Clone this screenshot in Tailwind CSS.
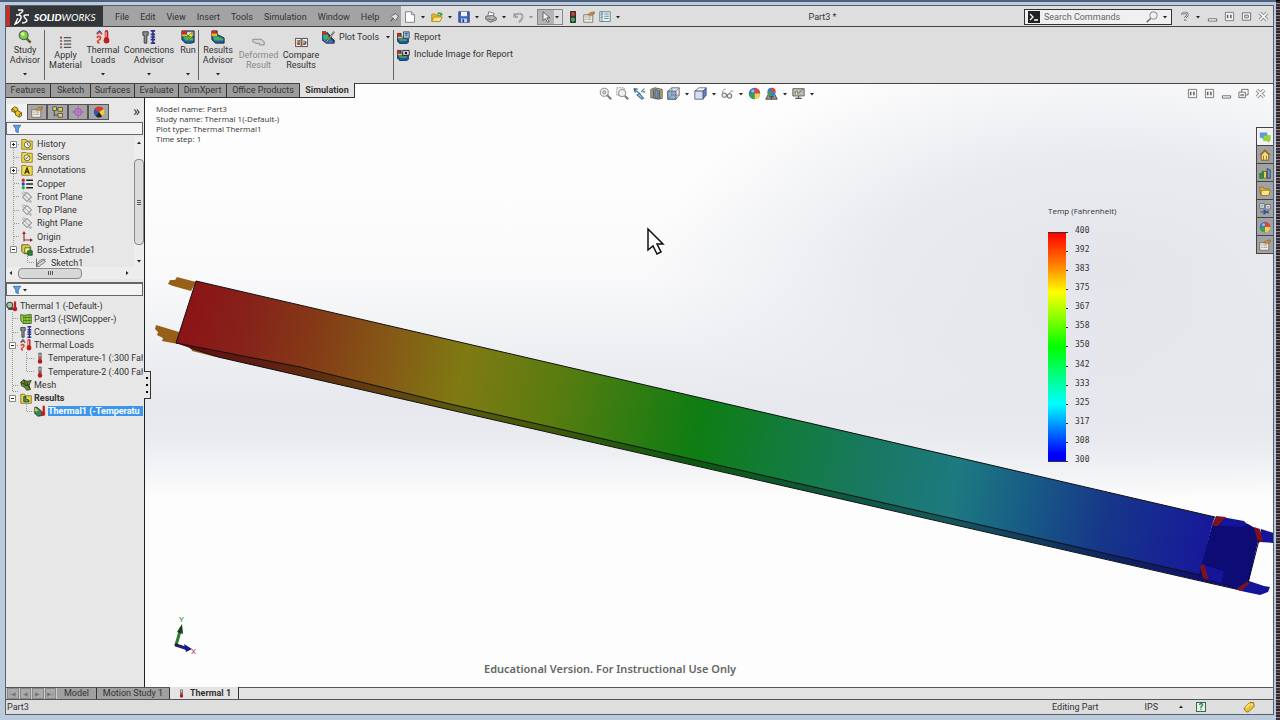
<!DOCTYPE html>
<html lang="en">
<head>
  <meta charset="UTF-8" />
  <meta name="viewport" content="width=device-width, initial-scale=1.0" />
  <title>SolidWorks - Part3 *</title>
  <script src="https://cdn.jsdelivr.net/npm/@tailwindcss/browser@4"></script>
</head>
<body class="h-screen overflow-hidden bg-black font-['Roboto','Liberation_Sans',sans-serif] text-[9px] leading-[10px] text-[#333]">

  <!-- Icon set -->
  <svg class="hidden">
    <symbol id="i-down" viewBox="0 0 6 4"><path d="M1 1h4L3 3.500z" fill="#222"/></symbol>
    <symbol id="i-mag" viewBox="0 0 16 16"><path d="M9.500 9.500l5 5" stroke="#5a6a20" stroke-width="3"/><circle cx="6.500" cy="6" r="5" fill="#7fd23c" stroke="#4c6670" stroke-width="1.500"/><circle cx="5.500" cy="4.500" r="2" fill="#e6f8a0"/></symbol>
    <symbol id="i-material" viewBox="0 0 16 16"><path d="M6 2h9M6 6h9M6 10h9M6 14h9" stroke="#555" stroke-width="1.300"/><circle cx="2.500" cy="2" r="1.400" fill="#b33"/><circle cx="2.500" cy="6" r="1.400" fill="#777"/><circle cx="2.500" cy="10" r="1.400" fill="#a55"/><circle cx="2.500" cy="14" r="1.400" fill="#777"/></symbol>
    <symbol id="i-copper" viewBox="0 0 16 16"><path d="M7 3h9M7 8h9M7 13h9" stroke="#222" stroke-width="2"/><circle cx="3" cy="3" r="2.200" fill="#d22"/><circle cx="3" cy="8" r="2.200" fill="#24a"/><circle cx="3" cy="13" r="2.200" fill="#2a5"/></symbol>
    <symbol id="i-loads" viewBox="0 0 16 16"><path d="M1 5l3-3 3 3M1 9c3-4 6 0 3 2s-3 3 0 4" fill="none" stroke="#d8431f" stroke-width="2"/><path d="M1 4l3-3 2 2" fill="none" stroke="#36c" stroke-width="1.500"/><path d="M12 2v9" stroke="#c21d1d" stroke-width="4" stroke-linecap="round"/><circle cx="12" cy="12" r="3.300" fill="#c21d1d"/><path d="M11.500 2v6" stroke="#fff"/></symbol>
    <symbol id="i-conn" viewBox="0 0 16 16"><path d="M1 2h6v4H5.500v9h-3V6H1z" fill="#8a8f98" stroke="#333"/><path d="M10 1h5M10 15h5M12.500 1v14M10 5h5M10 8h5M10 11h5" stroke="#2b3190" stroke-width="1.800"/></symbol>
    <symbol id="i-run" viewBox="0 0 16 16"><path d="M1 1h14v13l-3 1H5l-4-4z" fill="#1c5fae" stroke="#223"/><path d="M1 1h5v4H1z" fill="#d3271e"/><path d="M1 5h6v2H1z" fill="#f5b21d"/><path d="M7 2h7v4H7z" fill="#ded9b0"/><path d="M2 7h8l4 3v2H5z" fill="#45b649"/><path d="M14 1L8 7h3l-3 5 7-7h-3z" fill="#ffe83a" stroke="#665500" stroke-width=".6"/></symbol>
    <symbol id="i-plot" viewBox="0 0 16 16"><path d="M1 1h6v4l8 4v6H5l-4-4z" fill="#1c5fae" stroke="#223"/><path d="M1 1h5v4H1z" fill="#d3271e"/><path d="M1 4h6v3H1z" fill="#f5b21d"/><path d="M2 7h5l7 3v2H4z" fill="#43b648"/></symbol>
    <symbol id="i-deformed" viewBox="0 0 16 16"><path d="M1 4h10l4 3v4H9V9H5l-4-2z" fill="#d5d5d5" stroke="#8b8b8b" stroke-width="1.200"/></symbol>
    <symbol id="i-compare" viewBox="0 0 16 16"><path d="M.500 3h7v10h-7zM8.500 3h7v10h-7z" fill="#f2f2f2" stroke="#333"/><path d="M2 5h2v6H2zM10 5h2v6h-2z" fill="#e5a21e"/><path d="M4 5h2v3H4zM12 6h2v4h-2z" fill="#2b61c4"/><path d="M3 8h3v3H3zM10 9h3v2h-3z" fill="#c4382a"/></symbol>
    <symbol id="i-plottools" viewBox="0 0 16 16"><path d="M0 1h5v4l6 4 4 2v4H5l-5-4z" fill="#2c77c8" stroke="#223"/><path d="M0 1h5v3H0z" fill="#d3271e"/><path d="M1 5h5l5 5H3z" fill="#43b648"/><path d="M6 2l9 11M15 1L5 14" stroke="#333" stroke-width="2"/><path d="M15 1L5 14" stroke="#eee" stroke-width=".8"/></symbol>
    <symbol id="i-report" viewBox="0 0 16 16"><path d="M0 3h5v4l9 2v5l-3 2H4l-4-4z" fill="#1d57a8" stroke="#223"/><path d="M0 3h4v3H0z" fill="#d3271e"/><path d="M1 7h6v2H1z" fill="#f5c21d"/><path d="M2 10h10v2H4z" fill="#43b648"/><path d="M8 1h7v8H8z" fill="#9dbce8" stroke="#345"/><path d="M10 3h3M10 5h3" stroke="#245"/></symbol>
    <symbol id="i-incimg" viewBox="0 0 16 16"><path d="M0 3h5v4l9 2v5l-3 2H4l-4-4z" fill="#1d57a8" stroke="#223"/><path d="M0 3h4v3H0z" fill="#d3271e"/><path d="M1 7h6v2H1z" fill="#f5c21d"/><path d="M2 10h10v2H4z" fill="#43b648"/><path d="M7 3h8v6H7z" fill="#ddd" stroke="#111"/><circle cx="11" cy="6" r="1.500" fill="#111"/></symbol>
    <symbol id="i-new" viewBox="0 0 16 16"><path d="M2 1h8l4 4v10H2z" fill="#fff" stroke="#666"/><path d="M10 1v4h4" fill="#ddd" stroke="#666"/></symbol>
    <symbol id="i-open" viewBox="0 0 16 16"><path d="M1 14V4h5l1 2h6v3" fill="#e2b93c" stroke="#a67c14"/><path d="M1 14l3-6h11l-3 6z" fill="#fbe37c" stroke="#a67c14"/><path d="M8 4c1-3 4-3 5-1V1l3 4-4 2 .500-2C11 3 10 4 9 5z" fill="#35a535"/></symbol>
    <symbol id="i-save" viewBox="0 0 16 16"><path d="M1 1h14v14H1z" fill="#3c63b8" stroke="#1d3a80"/><path d="M4 1h8v6H4z" fill="#eef3fb"/><path d="M4 10h8v5H4z" fill="#c3cfe4"/><path d="M6 11h2v4H6z" fill="#1d3a80"/></symbol>
    <symbol id="i-print" viewBox="0 0 16 16"><path d="M4 6l1-5 7 2-1 4" fill="#fff" stroke="#555"/><path d="M1 7l9-1 5 3v3l-8 3-6-4z" fill="#b9b9b9" stroke="#444"/><path d="M3 10l6 2 4-2" fill="none" stroke="#555"/></symbol>
    <symbol id="i-undo" viewBox="0 0 16 16"><path d="M3 3v5h5" fill="none" stroke="#777" stroke-width="1.500"/><path d="M3 8c2-6 11-6 11 0 0 3-2 5-5 7" fill="none" stroke="#888" stroke-width="2.500"/><path d="M3 8c2-6 11-6 11 0 0 3-2 5-5 7" fill="none" stroke="#d4d4d4"/></symbol>
    <symbol id="i-arrow" viewBox="0 0 16 16"><path d="M4 1v12l3-3 3 5 2-1-3-5h4z" fill="#f2f2f2" stroke="#444"/></symbol>
    <symbol id="i-light" viewBox="0 0 16 16"><rect x="4" y="0" width="8" height="16" rx="1" fill="#333"/><circle cx="8" cy="4" r="2.700" fill="#d93a2b"/><circle cx="8" cy="11.500" r="2.700" fill="#36b54a"/></symbol>
    <symbol id="i-props" viewBox="0 0 16 16"><path d="M1 5h12v10H1z" fill="#f3efe4" stroke="#6b6252"/><path d="M3 8h2M6 8h5M3 11h2M6 11h5" stroke="#777"/><path d="M6 5l4-3 5-1v3l-5 2z" fill="#c98d4d" stroke="#7c522a" stroke-width=".7"/></symbol>
    <symbol id="i-options" viewBox="0 0 16 16"><path d="M1 1h14v13H1z" fill="#e6f0f4" stroke="#4a6d7c"/><path d="M4 1v13M7 4h6M7 7h6M7 10h6" stroke="#46707e"/><path d="M2 4l1 1 2-2M2 8l1 1 2-2" fill="none" stroke="#3a8a4a"/></symbol>
    <symbol id="i-pin" viewBox="0 0 16 16"><path d="M8 2l6 5-2 1-1 4-3 1-6-6 2-2 3-1z" fill="#ddd" stroke="#444"/><path d="M5 10l-4 5" stroke="#333" stroke-width="1.500"/></symbol>
    <symbol id="i-search" viewBox="0 0 16 16"><circle cx="10" cy="6" r="5" fill="#eef2f6" stroke="#667"/><path d="M6 10l-5 5" stroke="#666" stroke-width="2"/></symbol>
    <symbol id="i-min" viewBox="0 0 12 12"><path d="M1.500 8.500h9v2.500h-9z" fill="#fff" stroke="#666"/></symbol>
    <symbol id="i-tile" viewBox="0 0 12 12"><path d="M1.500 1.500h9v9h-9z" fill="#f4f4f4" stroke="#777"/><path d="M4 4v4M7.500 4v4" stroke="#666" stroke-width="1.700"/></symbol>
    <symbol id="i-max" viewBox="0 0 12 12"><path d="M1.500 2h9v8h-9z" fill="#fff" stroke="#666"/><path d="M4 4.500h4v3H4z" fill="#ddd" stroke="#666"/></symbol>
    <symbol id="i-restore" viewBox="0 0 12 12"><path d="M4 1.500h7v6H4z" fill="#fff" stroke="#666"/><path d="M1 4.500h7v6H1z" fill="#fff" stroke="#666"/><path d="M3 7h3v1.500H3z" fill="#ddd" stroke="#666" stroke-width=".8"/></symbol>
    <symbol id="i-close" viewBox="0 0 12 12"><path d="M2 2l8 8M10 2l-8 8" stroke="#777" stroke-width="3.600"/><path d="M2 2l8 8M10 2l-8 8" stroke="#fff" stroke-width="1.800"/></symbol>
    <symbol id="i-help" viewBox="0 0 12 12"><path d="M3 4c0-4 7-4 7 0 0 2-3 2-3 4M7 9.500v2" fill="none" stroke="#666" stroke-width="3"/><path d="M3 4c0-4 7-4 7 0 0 2-3 2-3 4M7 9.800v1.400" fill="none" stroke="#f4f4f4" stroke-width="1.200"/></symbol>
    <symbol id="i-zoomfit" viewBox="0 0 16 16"><circle cx="6.500" cy="6.500" r="5" fill="#eee" stroke="#777"/><circle cx="6.500" cy="6.500" r="2" fill="#ccc" stroke="#888"/><path d="M10 10l5 5" stroke="#777" stroke-width="2.500"/></symbol>
    <symbol id="i-zoomarea" viewBox="0 0 16 16"><path d="M1 1h9v9H1z" fill="none" stroke="#777" stroke-dasharray="2 1"/><circle cx="7.500" cy="7.500" r="4.500" fill="#eee" stroke="#777"/><path d="M11 11l4 4" stroke="#777" stroke-width="2.500"/></symbol>
    <symbol id="i-prev" viewBox="0 0 16 16"><path d="M1 2l8 7M1 2l2 5M1 2l5 .500" stroke="#3d7193" stroke-width="1.500"/><path d="M8 8l5 6-2 1-6-5zM10 6l4-4M12 6h3" fill="#9bc5df" stroke="#3d7193" stroke-width="1.300"/></symbol>
    <symbol id="i-section" viewBox="0 0 16 16"><path d="M1 3l5-2 9 2v11l-5 1-9-2z" fill="#c9b972" stroke="#444"/><path d="M4 3v10M12 4v10" stroke="#555" stroke-width="1.500"/><path d="M6 3l4 1v10l-4-1z" fill="#6a93cf" stroke="#456"/></symbol>
    <symbol id="i-orient" viewBox="0 0 16 16"><path d="M1 5l5-4h9v9l-4 5H1z" fill="#e8eff8" stroke="#555"/><path d="M1 5h10v10H1z" fill="#8fb2dc" stroke="#555"/><path d="M11 5l4-4M6 1v9h9M6 10l-5 5" stroke="#666" fill="none" stroke-width=".8"/></symbol>
    <symbol id="i-cube" viewBox="0 0 16 16"><path d="M1 5l5-4h9l-4 4z" fill="#fff" stroke="#557"/><path d="M11 5l4-4v9l-4 5z" fill="#5c7fc8" stroke="#557"/><path d="M1 5h10v10H1z" fill="#d3e0f6" stroke="#557"/></symbol>
    <symbol id="i-glasses" viewBox="0 0 16 16"><path d="M2 8c0-4 2-6 4-5M10 9c1-3 3-5 5-4" fill="none" stroke="#777"/><circle cx="4" cy="10" r="2.700" fill="#eee" stroke="#777" stroke-width="1.300"/><circle cx="10.500" cy="11" r="2.700" fill="#eee" stroke="#777" stroke-width="1.300"/></symbol>
    <symbol id="i-ball" viewBox="0 0 16 16"><circle cx="8" cy="8" r="7" fill="#3f6fd0"/><path d="M8 8V1a7 7 0 0 1 7 7z" fill="#e2453b"/><path d="M8 8h7a7 7 0 0 1-7 7z" fill="#f2d64a"/><path d="M8 8v7a7 7 0 0 1-7-7z" fill="#35a24c"/><circle cx="6" cy="5" r="2" fill="#fff" fill-opacity=".5"/></symbol>
    <symbol id="i-scene" viewBox="0 0 16 16"><path d="M1 15l3-6h8l3 6z" fill="#999" stroke="#333"/><path d="M5 12h6M8 9v6" stroke="#333"/><circle cx="8" cy="6" r="5" fill="#4776cf"/><path d="M8 6V1a5 5 0 0 1 5 5z" fill="#e2453b"/><path d="M8 6H3a5 5 0 0 0 5 5z" fill="#3aa650"/></symbol>
    <symbol id="i-screen" viewBox="0 0 16 16"><path d="M1 2h14v9H1z" fill="#b9bcae" stroke="#555"/><path d="M4 9V6h3v3M8 8l6-6" stroke="#666" fill="#eee"/><path d="M4 14h8M8 11v3" stroke="#555" stroke-width="1.500"/></symbol>
    <symbol id="i-part" viewBox="0 0 16 16"><path d="M1 4l4-3 4 2v3l5 3v4l-3 2-5-3v-3L1 7z" fill="#e9c62c" stroke="#4c3f06"/><path d="M1 4l4 2v3M9 6l-4 2M14 9l-3 2v3" fill="none" stroke="#4c3f06"/></symbol>
    <symbol id="i-config" viewBox="0 0 16 16"><path d="M3 1v13M3 4h5M3 12h5" stroke="#333"/><path d="M1 1h5v5H1zM8 2h6v5H8zM8 10h6v5H8z" fill="#e0cf50" stroke="#444"/></symbol>
    <symbol id="i-target" viewBox="0 0 16 16"><circle cx="8" cy="8" r="4.500" fill="none" stroke="#b058c8" stroke-width="1.500"/><path d="M8 0v16M0 8h16" stroke="#b058c8" stroke-width="1.300"/></symbol>
    <symbol id="i-rball" viewBox="0 0 16 16"><circle cx="8" cy="8" r="7" fill="#2d57b8"/><path d="M8 8L2 4a7 7 0 0 1 12 0z" fill="#dc3a28"/><path d="M8 8l6-4a7 7 0 0 1-2 10z" fill="#f0cf38"/><path d="M8 8l4 6a7 7 0 0 1-8 0z" fill="#222"/></symbol>
    <symbol id="i-filter" viewBox="0 0 16 16"><path d="M2 2h12l-4 6v6l-4-2V8z" fill="#5aa2e8" stroke="#1f4e92"/></symbol>
    <symbol id="i-history" viewBox="0 0 16 16"><path d="M1 2h6l1 2h7v11H1z" fill="#e8d23e" stroke="#7d6b10"/><circle cx="8.500" cy="9" r="4" fill="#fff" stroke="#333"/><path d="M8.500 6.500V9l2 1" fill="none" stroke="#222"/></symbol>
    <symbol id="i-sensor" viewBox="0 0 16 16"><path d="M1 2h6l1 1h7v12H1z" fill="#f1dc4c" stroke="#7d6b10"/><circle cx="8" cy="9" r="4" fill="#fbf4c0" stroke="#444"/><path d="M6 11l4-4" stroke="#333" stroke-width="1.300"/></symbol>
    <symbol id="i-annot" viewBox="0 0 16 16"><path d="M1 2h6l1 1h7v12H1z" fill="#f1dc4c" stroke="#7d6b10"/><path d="M5 13l3-8 3 8M6 10.500h4" fill="none" stroke="#222" stroke-width="1.500"/></symbol>
    <symbol id="i-plane" viewBox="0 0 16 16"><path d="M8 2l6 6-6 6-6-6z" fill="none" stroke="#666" stroke-width="1.200"/><path d="M1 2l13 12M3 1l4 2M10 14l4 1" stroke="#888"/></symbol>
    <symbol id="i-origin" viewBox="0 0 16 16"><path d="M4 14V3M4 12h10" stroke="#a3222c" stroke-width="1.500" fill="none"/><path d="M4 0l2.500 4h-5zM16 12l-4-2.500v5z" fill="#a3222c"/></symbol>
    <symbol id="i-extrude" viewBox="0 0 16 16"><path d="M1 1h9l3 3v9H4l-3-3z" fill="#d8cf46" stroke="#4e4a10"/><path d="M5 5h7v7H5z" fill="#f3ee9a" stroke="#4e4a10"/><path d="M9 9h6v6H9z" fill="#2c8a35" stroke="#154a1b"/></symbol>
    <symbol id="i-sketch" viewBox="0 0 16 16"><path d="M2 2v12M2 10c4-7 8-7 12-7" fill="none" stroke="#555"/><path d="M2 14l2-5 8-5 2 2-8 6z" fill="#ddd" stroke="#555"/></symbol>
    <symbol id="i-study" viewBox="0 0 16 16"><circle cx="5" cy="7" r="4" fill="#a8cc8a" stroke="#445" stroke-width="1.500"/><path d="M3 12h9" stroke="#345" stroke-width="2.500"/><path d="M12 2v9" stroke="#c21d1d" stroke-width="3"/><circle cx="12" cy="12" r="3" fill="#c21d1d"/></symbol>
    <symbol id="i-mesh" viewBox="0 0 16 16"><path d="M1 2l4 1 10-1v12H4L1 10z" fill="#a8cc3a" stroke="#274d12"/><path d="M5 3v11M8 3v11M12 2v12M4 6h11M4 10h11" stroke="#2d7a24"/></symbol>
    <symbol id="i-temp" viewBox="0 0 16 16"><path d="M8 1v10" stroke="#444" stroke-width="4"/><path d="M8 2v9" stroke="#e6e6e6" stroke-width="1.500"/><path d="M8 6v6" stroke="#c62222" stroke-width="1.800"/><circle cx="8" cy="12.500" r="3" fill="#b51c1c"/></symbol>
    <symbol id="i-meshpart" viewBox="0 0 16 16"><path d="M1 4l4-3 4 2 6-1-3 6 2 6-5 1-3-4-4-2z" fill="#6c8a33" stroke="#26320d"/><path d="M1 5l6 2M5 1l3 8M9 3l3 9M6 9l7-2" stroke="#26320d"/></symbol>
    <symbol id="i-results" viewBox="0 0 16 16"><path d="M1 3h5l1 2h8v10H1z" fill="#f0d640" stroke="#6f5e0e"/><path d="M5 6h3v3l4 2v2H5z" fill="#2c9a4a" stroke="#234"/></symbol>
    <symbol id="i-thermal" viewBox="0 0 16 16"><path d="M1 3h3l7 6v5l-6 1-4-4z" fill="#2b8a66" stroke="#123"/><path d="M1 3l5 4-3 2-2-1z" fill="#e0c22e"/><path d="M13 1v9" stroke="#c21d1d" stroke-width="3"/><circle cx="12" cy="11.500" r="3" fill="#c21d1d"/></symbol>
    <symbol id="i-chat" viewBox="0 0 16 16"><path d="M1 2h10v7H6l-2 2V9H1z" fill="#5a9be0"/><path d="M6 6h9v7h-2v2l-2-2H6z" fill="#9ad43c" stroke="#77b02a" stroke-width=".6"/></symbol>
    <symbol id="i-home" viewBox="0 0 16 16"><path d="M1 8l7-7 7 7" fill="#c88d2c" stroke="#6d4a10"/><path d="M3 8l5-5 5 5v7H3z" fill="#f4dd80" stroke="#6d4a10"/><path d="M6 9v6M10 9v6" stroke="#8a5a1a"/></symbol>
    <symbol id="i-lib" viewBox="0 0 16 16"><path d="M1 8l2 2 2-5v10H1z" fill="#2f9c3c" stroke="#173"/><path d="M6 6h4v9H6z" fill="#e4d040" stroke="#553"/><path d="M11 2l4 2v11h-4z" fill="#6f95cc" stroke="#235"/></symbol>
    <symbol id="i-folder" viewBox="0 0 16 16"><path d="M1 3h5l1 2h6v8H2z" fill="#dcb848" stroke="#8a6a14"/><path d="M3 7h12l-2 7H3z" fill="#fae58a" stroke="#8a6a14"/></symbol>
    <symbol id="i-palette" viewBox="0 0 16 16"><path d="M1 1h6v6H1zM9 2h6v6H9z" fill="#eee" stroke="#555"/><path d="M3 3h2v2H3zM11 4h2v2h-2z" fill="#48a"/><path d="M2 12h6M6 9l4 3-4 3M12 10v4" fill="none" stroke="#23419c" stroke-width="1.600"/></symbol>
    <symbol id="i-tag" viewBox="0 0 16 16"><path d="M2 9l7-7 5 0 1 5-7 7c-2 1-4 1-5-1s-2-3-1-4z" fill="#f0c52c" stroke="#7a5a08"/><path d="M4 9l5-5" stroke="#fff3a8" stroke-width="1.500"/><circle cx="12" cy="4.500" r="1" fill="#fff"/></symbol>
  </svg>

  <div class="flex h-full">
    <!-- Application window -->
    <div class="flex min-w-0 flex-1 flex-col border-t-2 border-[#4f607c] bg-[#bccbdc] pb-[5px] pl-[5px] pr-[2px] pt-[3px]">
      <div class="flex min-h-0 flex-1 flex-col border border-[#56606e] bg-[#dedede]">

        <!-- Title and menu bar -->
        <header class="flex h-[21px] shrink-0 items-stretch border-b border-[#444] *:pt-px">
          <div class="flex w-[97px] items-center gap-1 border-l-4 border-[#c03028] bg-[#333639] pl-1 text-white">
            <svg class="h-4 w-4" viewBox="0 0 16 16" fill="none" stroke="#fff" stroke-width="1.400"><path d="M4 1h4c2 0 0 3-3 4M2 6h3c4 0 2 7-4 9l3-6M15 6h-3c-4 0-1 3 0 4 2 2 0 4-4 4"/></svg>
            <span class="font-['Lato','Liberation_Sans',sans-serif] text-[10px] font-black italic">SOLID<span class="font-normal">WORKS</span></span>
          </div>
          <nav class="flex w-[298px] items-center gap-[11px] bg-[#a3a3a3] pl-3">
            <button>File</button><button>Edit</button><button>View</button><button>Insert</button><button>Tools</button><button>Simulation</button><button>Window</button><button>Help</button>
            <svg class="h-[10px] w-[10px]"><use href="#i-pin"/></svg>
          </nav>
          <div class="flex items-center gap-1 pl-[3px]">
            <button aria-label="New"><svg class="h-3 w-3"><use href="#i-new"/></svg></button><svg class="mr-px h-1 w-[6px]"><use href="#i-down"/></svg>
            <button aria-label="Open"><svg class="h-3 w-3"><use href="#i-open"/></svg></button><svg class="mr-px h-1 w-[6px]"><use href="#i-down"/></svg>
            <button aria-label="Save"><svg class="h-3 w-3"><use href="#i-save"/></svg></button><svg class="mr-px h-1 w-[6px]"><use href="#i-down"/></svg>
            <button aria-label="Print"><svg class="h-3 w-3"><use href="#i-print"/></svg></button><svg class="mr-px h-1 w-[6px]"><use href="#i-down"/></svg>
            <button aria-label="Undo"><svg class="h-3 w-3"><use href="#i-undo"/></svg></button><svg class="-mr-px h-1 w-[6px] opacity-40"><use href="#i-down"/></svg>
            <div class="flex h-4 items-center border border-[#888]">
              <button aria-label="Select" class="flex h-full w-4 items-center justify-center bg-[#b4b4b4]"><svg class="h-3 w-3"><use href="#i-arrow"/></svg></button>
              <button aria-label="Select options" class="w-2"><svg class="h-1 w-[6px]"><use href="#i-down"/></svg></button>
            </div>
            <button aria-label="Rebuild"><svg class="h-3 w-3"><use href="#i-light"/></svg></button>
            <button aria-label="File properties"><svg class="h-3 w-3"><use href="#i-props"/></svg></button>
            <button aria-label="Options"><svg class="h-3 w-3"><use href="#i-options"/></svg></button><svg class="h-1 w-[6px]"><use href="#i-down"/></svg>
          </div>
          <p class="flex-1 self-center text-center">Part3 *</p>
          <div class="flex items-center gap-[6px] pr-1">
            <label class="mr-[2px] flex h-4 w-[148px] items-center gap-1 border border-[#333] bg-[#f0f0f0] px-[3px]">
              <svg class="h-3 w-3 shrink-0" viewBox="0 0 12 12"><path d="M0 0h12v12H0z" fill="#222"/><path d="M2 3l3 3-3 3M6 9h4" fill="none" stroke="#fff" stroke-width="1.300"/></svg>
              <input type="text" aria-label="Search Commands" placeholder="Search Commands" class="min-w-0 flex-1 placeholder:text-[#666] outline-none" />
              <svg class="h-3 w-3 shrink-0"><use href="#i-search"/></svg>
              <svg class="h-1 w-[6px] shrink-0"><use href="#i-down"/></svg>
            </label>
            <button aria-label="Help"><svg class="h-[11px] w-[9px]"><use href="#i-help"/></svg></button>
            <svg class="h-1 w-[6px]"><use href="#i-down"/></svg>
            <button aria-label="Minimize"><svg class="h-[11px] w-[11px]"><use href="#i-min"/></svg></button>
            <button aria-label="Tile"><svg class="h-[11px] w-[11px]"><use href="#i-tile"/></svg></button>
            <button aria-label="Maximize"><svg class="h-[11px] w-[11px]"><use href="#i-max"/></svg></button>
            <button aria-label="Close"><svg class="h-[11px] w-[11px]"><use href="#i-close"/></svg></button>
          </div>
        </header>

        <!-- Ribbon -->
        <div class="flex h-[57px] shrink-0 border-b border-[#444] pb-[3px] pt-[3px]">
          <button class="flex w-[38px] flex-col items-center gap-px"><svg class="h-[14px] w-[14px]"><use href="#i-mag"/></svg><span>Study<br>Advisor</span><svg class="mt-[6px] h-1 w-[6px]"><use href="#i-down"/></svg></button>
          <div class="w-px bg-[#666]"></div>
          <button class="flex w-[41px] flex-col items-center gap-px pt-[6px]"><svg class="h-[13px] w-[13px]"><use href="#i-material"/></svg><span>Apply<br>Material</span></button>
          <button class="flex w-[34px] flex-col items-center gap-px"><svg class="h-[14px] w-[14px]"><use href="#i-loads"/></svg><span>Thermal<br>Loads</span><svg class="mt-[6px] h-1 w-[6px]"><use href="#i-down"/></svg></button>
          <button class="flex w-[58px] flex-col items-center gap-px"><svg class="h-[14px] w-[14px]"><use href="#i-conn"/></svg><span>Connections<br>Advisor</span><svg class="mt-[6px] h-1 w-[6px]"><use href="#i-down"/></svg></button>
          <button class="flex w-5 flex-col items-center gap-px"><svg class="h-[14px] w-[14px]"><use href="#i-run"/></svg><span>Run<br>&nbsp;</span><svg class="mt-[6px] h-1 w-[6px]"><use href="#i-down"/></svg></button>
          <div class="w-px bg-[#666]"></div>
          <button class="flex w-[38px] flex-col items-center gap-px"><svg class="h-[14px] w-[14px]"><use href="#i-plot"/></svg><span>Results<br>Advisor</span><svg class="mt-[6px] h-1 w-[6px]"><use href="#i-down"/></svg></button>
          <button class="flex w-[43px] flex-col items-center gap-px pt-[6px] text-[#8a8a8a]"><svg class="h-[13px] w-[13px]"><use href="#i-deformed"/></svg><span>Deformed<br>Result</span></button>
          <button class="flex w-[42px] flex-col items-center gap-px pt-[6px]"><svg class="h-[13px] w-[13px]"><use href="#i-compare"/></svg><span>Compare<br>Results</span></button>
          <button class="flex h-[14px] w-[69px] items-center gap-1"><svg class="h-[13px] w-[13px]"><use href="#i-plottools"/></svg><span class="flex-1 text-left">Plot Tools</span><svg class="h-1 w-[6px]"><use href="#i-down"/></svg></button>
          <div class="ml-[2px] w-px bg-[#666]"></div>
          <div class="flex flex-col gap-[3px] pl-[3px]">
            <button class="flex h-[14px] items-center gap-1"><svg class="h-[13px] w-[13px]"><use href="#i-report"/></svg>Report</button>
            <button class="flex h-[14px] items-center gap-1"><svg class="h-[13px] w-[13px]"><use href="#i-incimg"/></svg>Include Image for Report</button>
          </div>
        </div>

        <!-- Work area -->
        <main class="relative flex min-h-0 flex-1 flex-col">
          <!-- 3D model -->
          <svg class="absolute inset-0 h-full w-full bg-[#fdfdfd]" viewBox="6 84 1267 603" preserveAspectRatio="xMidYMid slice">
            <defs>
              <linearGradient id="horizon" x1="0" y1="0" x2="0" y2="1">
                <stop offset="0" stop-color="#e5e7ed" stop-opacity="0"/><stop offset=".3" stop-color="#e5e7ed" stop-opacity=".2"/><stop offset=".7" stop-color="#e6e8ed"/><stop offset=".8" stop-color="#e6e8ed" stop-opacity=".85"/><stop offset="1" stop-color="#e5e7ed" stop-opacity="0"/>
              </linearGradient>
              <radialGradient id="shade"><stop offset="0" stop-color="#e1e3e9" stop-opacity=".9"/><stop offset=".5" stop-color="#e4e6eb" stop-opacity=".8"/><stop offset="1" stop-color="#e7e9ee" stop-opacity="0"/></radialGradient>
              <linearGradient id="heat" gradientUnits="userSpaceOnUse" x1="185" y1="310" x2="1210" y2="545">
                <stop offset="0" stop-color="#8c1416"/><stop offset=".06" stop-color="#86221a"/><stop offset=".13" stop-color="#843c16"/><stop offset=".2" stop-color="#855a16"/><stop offset=".27" stop-color="#7f7a12"/><stop offset=".36" stop-color="#5a7c10"/><stop offset=".5" stop-color="#0e7d12"/><stop offset=".58" stop-color="#127c3a"/><stop offset=".67" stop-color="#187862"/><stop offset=".75" stop-color="#1d7a80"/><stop offset=".82" stop-color="#185c86"/><stop offset=".9" stop-color="#163689"/><stop offset="1" stop-color="#17189a"/>
              </linearGradient>
            </defs>
            <rect x="0" y="190" width="1280" height="310" fill="url(#horizon)"/>
            <ellipse cx="1110" cy="270" rx="460" ry="230" fill="url(#shade)"/>
            <path d="M196 282l-19-5-2 3-5 0-2 4 5 2 18 5zM179 332l-23-7-1 4 3 3-1 3 6 3-1 3 16 3zM190 346l2 5 24 6-4-6z" fill="#96601a"/>
            <path d="M176 343L300 360 1200 570 1241 590 218 357 190 348z" fill="url(#heat)"/>
            <path d="M176 343L300 360 1200 570 1241 590 218 357 190 348z" fill="#000" fill-opacity=".28"/>
            <path d="M196 281L1215 517 1212 525 1200 575 450 404 300 367 176 343z" fill="url(#heat)"/>
            <path d="M190 348L218 357 1240 590M1215 517L196 281 176 343 300 367 450 404 1200 575" fill="none" stroke="#111" stroke-width="1"/>
            <path d="M1212 525l4-8 32 7 12 7-1 6-10 43-8 11-42-16z" fill="#0d0b74"/>
            <path d="M1222 517l22 4 3 3-4 3-23-1zM1204 565l20 6-2 12-15-4zM1261 529l13 4v10l-14-1zM1249 581l15 5 6 1-2 5-8 3-19-4z" fill="#15159a"/>
            <path d="M1212 526l4-10 10 1-8 9zM1254 527l6 2 3 12-5 2zM1200 566l4-2 5 16-6-2zM1236 589l12-8 2 2-9 8z" fill="#7d1220"/>
            <path d="M1259 540l-11 43" stroke="#07063c"/>
            <!-- triad -->
            <path d="M176 645l5-17" stroke="#2f7a35" stroke-width="3"/><path d="M177 632l5-8 1 10z" fill="#18401c"/>
            <path d="M176 645l12 4" stroke="#20206e" stroke-width="3"/><path d="M184 644l8 5-6 3z" fill="#17178c"/>
            <circle cx="176" cy="645" r="1.500" fill="#222"/>
            <text x="179" y="622" font-size="8" fill="#3a8a3a">Y</text><text x="191" y="654" font-size="8" fill="#b33">X</text>
            <!-- pointer -->
            <path d="M648 229v21l5-4 4 8 4-2-4-8h6z" fill="#fff" stroke="#111" stroke-width="1.500"/>
          </svg>

          <nav class="relative flex h-[14px] shrink-0">
            <a href="#" class="w-[45px] border-b border-r border-[#333] bg-[#9c9c9c] pt-px text-center">Features</a>
            <a href="#" class="w-[40px] border-b border-r border-[#333] bg-[#9c9c9c] pt-px text-center">Sketch</a>
            <a href="#" class="w-[44px] border-b border-r border-[#333] bg-[#9c9c9c] pt-px text-center">Surfaces</a>
            <a href="#" class="w-[44px] border-b border-r border-[#333] bg-[#9c9c9c] pt-px text-center">Evaluate</a>
            <a href="#" class="w-[48px] border-b border-r border-[#333] bg-[#9c9c9c] pt-px text-center">DimXpert</a>
            <a href="#" class="w-[73px] border-b border-r border-[#333] bg-[#9c9c9c] pt-px text-center">Office Products</a>
            <a href="#" class="-mt-px w-[55px] border-b border-r border-[#333] bg-[#e2e2e2] pt-[2px] text-center font-bold">Simulation</a>
          </nav>

          <div class="relative flex min-h-0 flex-1">
            <!-- Feature manager -->
            <aside class="flex w-[139px] shrink-0 flex-col border-r border-[#222] bg-[#e7e7e7]">
              <div class="flex h-[22px] shrink-0 items-end pl-px">
                <button aria-label="Feature tree" class="flex h-4 w-5 items-center justify-center bg-[#f2f2f2]"><svg class="h-3 w-3"><use href="#i-part"/></svg></button>
                <button aria-label="Property manager" class="flex h-4 w-5 items-center justify-center border border-[#555] bg-[#a5a5a5]"><svg class="h-3 w-3"><use href="#i-props"/></svg></button>
                <button aria-label="Configurations" class="flex h-4 w-[21px] items-center justify-center border border-[#555] bg-[#a5a5a5]"><svg class="h-3 w-3"><use href="#i-config"/></svg></button>
                <button aria-label="DimXpert manager" class="flex h-4 w-5 items-center justify-center border border-[#555] bg-[#a5a5a5]"><svg class="h-3 w-3"><use href="#i-target"/></svg></button>
                <button aria-label="Display manager" class="flex h-4 w-[21px] items-center justify-center border border-[#555] bg-[#a5a5a5]"><svg class="h-3 w-3"><use href="#i-rball"/></svg></button>
                <button aria-label="Expand" class="mb-1 ml-auto mr-1 text-[15px]">»</button>
              </div>
              <div class="mr-px mt-[2px] flex h-[13px] shrink-0 items-center border border-[#666] bg-[#f3f3f3] pl-[5px]"><svg class="h-[10px] w-[10px]"><use href="#i-filter"/></svg></div>
              <div class="flex h-[132px] shrink-0 overflow-hidden pt-[2px]">
                <ul class="relative flex h-[133px] min-w-0 flex-1 flex-col whitespace-nowrap pl-[15px] *:flex *:flex-1 *:items-center *:gap-[4px]">
                  <li><svg class="h-3 w-3"><use href="#i-history"/></svg>History</li>
                  <li><svg class="h-3 w-3"><use href="#i-sensor"/></svg>Sensors</li>
                  <li><svg class="h-3 w-3"><use href="#i-annot"/></svg>Annotations</li>
                  <li><svg class="h-3 w-3"><use href="#i-copper"/></svg>Copper</li>
                  <li><svg class="h-3 w-3"><use href="#i-plane"/></svg>Front Plane</li>
                  <li><svg class="h-3 w-3"><use href="#i-plane"/></svg>Top Plane</li>
                  <li><svg class="h-3 w-3"><use href="#i-plane"/></svg>Right Plane</li>
                  <li><svg class="h-3 w-3"><use href="#i-origin"/></svg>Origin</li>
                  <li><svg class="h-3 w-3"><use href="#i-extrude"/></svg>Boss-Extrude1</li>
                  <li class="pl-[14px]"><svg class="h-3 w-3"><use href="#i-sketch"/></svg>Sketch1</li>
                  <!-- tree lines and expanders -->
                  <svg class="absolute left-0 top-0 flex-none! h-[132px] w-8" viewBox="0 0 32 132" fill="none">
                    <path d="M7.500 7v106M8 20.500h6M8 46.500h6M8 59.500h6M8 73.500h6M8 86.500h6M8 99.500h6M21.500 119v6.500h7M8 7.500h6M8 33.500h6" stroke="#999" stroke-dasharray="1 1"/>
                    <path d="M4.500 4.500h6v6h-6zM4.500 30.500h6v6h-6zM4.500 109.500h6v6h-6z" fill="#fff" stroke="#888"/>
                    <path d="M6 7.500h3M7.500 6v3M6 33.500h3M7.500 32v3M6 112.500h3" stroke="#222"/>
                  </svg>
                </ul>
                <div class="flex w-[10px] flex-col items-center bg-[#ededed] py-1">
                  <svg class="h-1 w-[6px] rotate-180"><use href="#i-down"/></svg>
                  <div class="mt-[14px] flex h-[86px] w-full flex-col items-center justify-center gap-px rounded-sm border border-[#888] bg-[#dcdcdc]"><i class="h-px w-1 bg-[#555]"></i><i class="h-px w-1 bg-[#555]"></i><i class="h-px w-1 bg-[#555]"></i></div>
                  <svg class="mt-auto h-1 w-[6px]"><use href="#i-down"/></svg>
                </div>
              </div>
              <div class="flex h-3 shrink-0 items-center gap-1 bg-[#ededed] pl-[2px] pr-[14px]">
                <svg class="h-1 w-[6px] rotate-90"><use href="#i-down"/></svg>
                <div class="flex h-[11px] w-16 items-center justify-center gap-px rounded-sm border border-[#888] bg-[#d8d8d8]"><i class="h-1 w-px bg-[#555]"></i><i class="h-1 w-px bg-[#555]"></i><i class="h-1 w-px bg-[#555]"></i></div>
                <svg class="ml-auto h-1 w-[6px] -rotate-90"><use href="#i-down"/></svg>
              </div>
              <div class="mr-px mt-[3px] flex h-[14px] shrink-0 items-center border border-t-2 border-[#666] bg-[#f3f3f3] pl-[5px]"><svg class="h-[10px] w-[10px]"><use href="#i-filter"/></svg><svg class="h-1 w-[6px]"><use href="#i-down"/></svg></div>
              <ul class="relative mr-px mt-[3px] flex h-[119px] shrink-0 flex-col overflow-hidden whitespace-nowrap pl-[14px] *:flex *:flex-1 *:items-center *:gap-[2px]">
                <li class="-ml-[14px]"><svg class="h-3 w-3"><use href="#i-study"/></svg>Thermal 1 (-Default-)</li>
                <li><svg class="h-3 w-3"><use href="#i-mesh"/></svg>Part3 (-[SW]Copper-)</li>
                <li><svg class="h-3 w-3"><use href="#i-conn"/></svg>Connections</li>
                <li><svg class="h-3 w-3"><use href="#i-loads"/></svg>Thermal Loads</li>
                <li class="pl-[14px]"><svg class="h-3 w-3 shrink-0"><use href="#i-temp"/></svg>Temperature-1 (:300 Fah</li>
                <li class="pl-[14px]"><svg class="h-3 w-3 shrink-0"><use href="#i-temp"/></svg>Temperature-2 (:400 Fah</li>
                <li><svg class="h-3 w-3"><use href="#i-meshpart"/></svg>Mesh</li>
                <li class="font-bold"><svg class="h-3 w-3"><use href="#i-results"/></svg>Results</li>
                <li class="pl-[14px] font-bold"><svg class="h-3 w-3 shrink-0"><use href="#i-thermal"/></svg><span class="flex-1 bg-[#3c96ec] text-white">Thermal1 (-Temperatu</span></li>
                <svg class="absolute left-0 top-0 flex-none! h-[119px] w-8" viewBox="0 0 32 119" fill="none">
                  <path d="M6.500 13v80M7 19.500h6M7 33.500h6M7 86.500h6M7 46.500h6M7 92.500h6M20.500 53v20M21 59.500h7M21 72.500h7M20.500 99v13.500h7" stroke="#999" stroke-dasharray="1 1"/>
                  <path d="M3.500 43.500h6v6h-6zM3.500 96.500h6v6h-6z" fill="#fff" stroke="#888"/><path d="M5 46.500h3M5 99.500h3" stroke="#222"/>
                </svg>
              </ul>
            </aside>
            <button aria-label="Collapse panel" class="absolute left-[138px] top-[273px] flex h-[28px] w-[7px] flex-col items-center justify-evenly border border-l-0 border-[#333] bg-[#e7e7e7]"><i class="h-[2px] w-[2px] bg-black"></i><i class="h-[2px] w-[2px] bg-black"></i><i class="h-[2px] w-[2px] bg-black"></i></button>

            <section class="relative min-w-0 flex-1">
              <p class="pl-[11px] pt-[6px] font-['Open_Sans','Noto_Sans',sans-serif] text-[8px]">Model name: Part3<br>Study name: Thermal 1(-Default-)<br>Plot type: Thermal Thermal1<br>Time step: 1</p>

              <!-- Heads-up view toolbar -->
              <div class="absolute inset-x-0 -top-[11px] flex items-center justify-center gap-1 pr-1">
                <button aria-label="Zoom to fit"><svg class="h-[13px] w-[13px]"><use href="#i-zoomfit"/></svg></button>
                <button aria-label="Zoom to area"><svg class="h-[13px] w-[13px]"><use href="#i-zoomarea"/></svg></button>
                <button aria-label="Previous view"><svg class="h-[13px] w-[13px]"><use href="#i-prev"/></svg></button>
                <button aria-label="Section view"><svg class="h-[13px] w-[13px]"><use href="#i-section"/></svg></button>
                <button aria-label="View orientation" class="flex items-center gap-1"><svg class="h-[13px] w-[13px]"><use href="#i-orient"/></svg><svg class="h-1 w-[6px]"><use href="#i-down"/></svg></button>
                <button aria-label="Display style" class="flex items-center gap-1"><svg class="h-[13px] w-[13px]"><use href="#i-cube"/></svg><svg class="h-1 w-[6px]"><use href="#i-down"/></svg></button>
                <button aria-label="Hide or show items" class="flex items-center gap-1"><svg class="h-[13px] w-[13px]"><use href="#i-glasses"/></svg><svg class="h-1 w-[6px]"><use href="#i-down"/></svg></button>
                <button aria-label="Edit appearance"><svg class="h-[13px] w-[13px]"><use href="#i-ball"/></svg></button>
                <button aria-label="Apply scene" class="flex items-center gap-1"><svg class="h-[13px] w-[13px]"><use href="#i-scene"/></svg><svg class="h-1 w-[6px]"><use href="#i-down"/></svg></button>
                <button aria-label="View settings" class="flex items-center gap-1"><svg class="h-[13px] w-[13px]"><use href="#i-screen"/></svg><svg class="h-1 w-[6px]"><use href="#i-down"/></svg></button>
              </div>
              <div class="absolute -top-[10px] right-[7px] flex gap-[6px]">
                <button aria-label="Split left"><svg class="h-[11px] w-[11px]"><use href="#i-tile"/></svg></button>
                <button aria-label="Split right"><svg class="h-[11px] w-[11px]"><use href="#i-tile"/></svg></button>
                <button aria-label="Minimize document"><svg class="h-[11px] w-[11px]"><use href="#i-min"/></svg></button>
                <button aria-label="Restore document"><svg class="h-[11px] w-[11px]"><use href="#i-restore"/></svg></button>
                <button aria-label="Close document"><svg class="h-[11px] w-[11px]"><use href="#i-close"/></svg></button>
              </div>

              <!-- Temperature legend -->
              <div class="absolute right-[157px] top-[108px] w-[68px] whitespace-nowrap text-[8px]">
                <p class="font-['Open_Sans','Noto_Sans',sans-serif]">Temp (Fahrenheit)</p>
                <div class="mt-[10px] flex">
                  <div class="mt-[6px] h-[230px] w-[18px] border-y border-[#333] bg-[linear-gradient(#f00,#ff8000_14%,#ff0_26%,#0f0_50%,#0ff_75%,#00f_97%)]"></div>
                  <div class="mt-[6px] flex h-[230px] flex-col justify-between *:h-px *:w-[2px] *:bg-[#333]"><i></i><i></i><i></i><i></i><i></i><i></i><i></i><i></i><i></i><i></i><i></i><i></i><i></i></div>
                  <ul class="flex h-[239px] flex-col justify-between pl-[7px] font-['DejaVu_Sans_Mono',monospace]">
                    <li>400</li><li>392</li><li>383</li><li>375</li><li>367</li><li>358</li><li>350</li><li>342</li><li>333</li><li>325</li><li>317</li><li>308</li><li>300</li>
                  </ul>
                </div>
              </div>

              <!-- Task pane -->
              <div class="absolute right-0 top-[29px] flex w-[17px] flex-col border-b border-l border-[#444] *:flex *:h-[18px] *:items-center *:justify-center *:border-t *:border-[#444]">
                <button aria-label="Forum" class="bg-[#f2f2f2]"><svg class="h-3 w-3"><use href="#i-chat"/></svg></button>
                <button aria-label="Resources" class="bg-[#a2a2a2]"><svg class="h-3 w-3"><use href="#i-home"/></svg></button>
                <button aria-label="Design library" class="bg-[#a2a2a2]"><svg class="h-3 w-3"><use href="#i-lib"/></svg></button>
                <button aria-label="File explorer" class="bg-[#a2a2a2]"><svg class="h-3 w-3"><use href="#i-folder"/></svg></button>
                <button aria-label="View palette" class="bg-[#a2a2a2]"><svg class="h-3 w-3"><use href="#i-palette"/></svg></button>
                <button aria-label="Appearances" class="bg-[#a2a2a2]"><svg class="h-3 w-3"><use href="#i-ball"/></svg></button>
                <button aria-label="Custom properties" class="bg-[#a2a2a2]"><svg class="h-3 w-3"><use href="#i-props"/></svg></button>
              </div>

              <p class="absolute bottom-[13px] left-[339px] whitespace-nowrap font-['Noto_Sans','Open_Sans',sans-serif] text-[11px] font-semibold text-[#666]">Educational Version. For Instructional Use Only</p>
            </section>
          </div>
        </main>

        <!-- Document tabs -->
        <div class="flex h-[13px] shrink-0 border-y border-[#555] bg-[#e4e4e4]">
          <div class="flex w-[51px] gap-px bg-[#ccc] px-px text-center text-[6px] text-[#777] *:flex-1 *:border *:border-[#888] *:bg-[#aaa] *:leading-[9px]">
            <button aria-label="First">|◀</button><button aria-label="Previous">◀</button><button aria-label="Next">▶</button><button aria-label="Last">▶|</button>
          </div>
          <a href="#" class="w-[40px] border-r border-[#333] bg-[#a0a0a0] text-center">Model</a>
          <a href="#" class="w-[73px] border-r border-[#333] bg-[#a0a0a0] text-center">Motion Study 1</a>
          <a href="#" class="-mt-px flex w-[69px] items-center justify-center gap-1 border-r border-[#333] bg-[#e4e4e4] font-bold"><svg class="h-[9px] w-[9px]"><use href="#i-temp"/></svg>Thermal 1</a>
        </div>
        <footer class="flex h-[14px] shrink-0 items-center pl-px pr-[18px]">
          <span>Part3</span>
          <span class="ml-auto">Editing Part</span>
          <span class="ml-[46px]">IPS</span>
          <svg class="ml-5 h-1 w-[6px] rotate-180"><use href="#i-down"/></svg>
          <button aria-label="Quick tips" class="ml-3 h-[10px] w-[10px] border border-[#356b4a] bg-[#e4f2ea] text-[9px] font-bold leading-[8px] text-[#1c7a3c]">?</button>
          <svg class="ml-[37px] h-3 w-3"><use href="#i-tag"/></svg>
        </footer>
      </div>
    </div>
    <!-- Desktop edge behind the window -->
    <div class="mt-px w-[4px] bg-[repeating-linear-gradient(#2a2228_0_2px,#9a8d96_2px_3px,#3b3036_3px_5px,#6a5b64_5px_6px)]"></div>
  </div>
</body>
</html>
